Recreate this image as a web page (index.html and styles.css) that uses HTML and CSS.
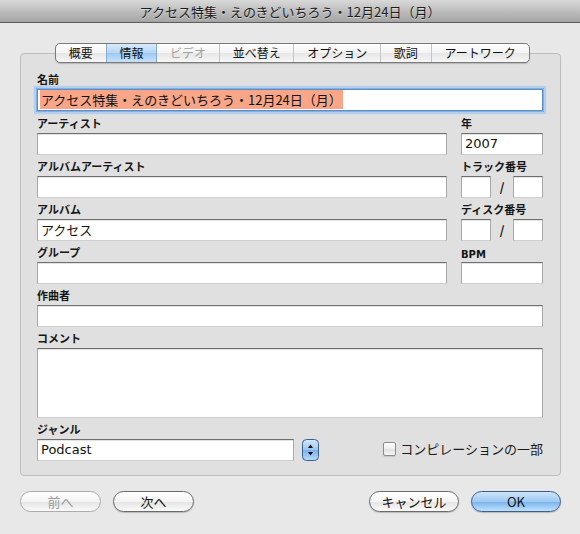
FILE: index.html
```html
<!DOCTYPE html>
<html lang="ja">
<head>
<meta charset="utf-8">
<title>情報</title>
<link rel="stylesheet" href="styles.css">
</head>
<body>
<div class="window">
  <div class="titlebar">アクセス特集・えのきどいちろう・12月24日（月）</div>
  <div class="content">
    <div class="tabs">
      <div class="tab">概要</div>
      <div class="tab sel">情報</div>
      <div class="tab dis">ビデオ</div>
      <div class="tab">並べ替え</div>
      <div class="tab">オプション</div>
      <div class="tab">歌詞</div>
      <div class="tab">アートワーク</div>
    </div>
    <div class="group">
      <div class="grid">
        <div class="field span name">
          <div class="label">名前</div>
          <div class="input focus"><span class="hl">アクセス特集・えのきどいちろう・12月24日（月）</span></div>
        </div>
        <div class="field">
          <div class="label">アーティスト</div>
          <div class="input"></div>
        </div>
        <div class="field">
          <div class="label">年</div>
          <div class="input latin">2007</div>
        </div>
        <div class="field">
          <div class="label">アルバムアーティスト</div>
          <div class="input"></div>
        </div>
        <div class="field">
          <div class="label">トラック番号</div>
          <div class="pair"><div class="input small"></div><span class="slash">/</span><div class="input small"></div></div>
        </div>
        <div class="field">
          <div class="label">アルバム</div>
          <div class="input">アクセス</div>
        </div>
        <div class="field">
          <div class="label">ディスク番号</div>
          <div class="pair"><div class="input small"></div><span class="slash">/</span><div class="input small"></div></div>
        </div>
        <div class="field">
          <div class="label">グループ</div>
          <div class="input"></div>
        </div>
        <div class="field">
          <div class="label latin">BPM</div>
          <div class="input"></div>
        </div>
        <div class="field span">
          <div class="label">作曲者</div>
          <div class="input"></div>
        </div>
        <div class="field span">
          <div class="label">コメント</div>
          <div class="input area"></div>
        </div>
        <div class="field span">
          <div class="label">ジャンル</div>
          <div class="genre-row">
            <div class="input latin genre">Podcast</div>
            <svg class="stepper" width="17" height="22" viewBox="0 0 17 22">
              <defs>
                <linearGradient id="sg" x1="0" y1="0" x2="0" y2="1">
                  <stop offset="0" stop-color="#d6e8fb"/>
                  <stop offset="0.48" stop-color="#9cc6f1"/>
                  <stop offset="0.52" stop-color="#7cb2ec"/>
                  <stop offset="1" stop-color="#b9dcfb"/>
                </linearGradient>
              </defs>
              <rect x="0.5" y="0.5" width="16" height="21" rx="4" fill="url(#sg)" stroke="#3d5f8c"/>
              <path d="M8.5 5.5 L11 9 L6 9 Z" fill="#111"/>
              <path d="M8.5 16.5 L11 13 L6 13 Z" fill="#111"/>
            </svg>
            <label class="check"><span class="box"></span>コンピレーションの一部</label>
          </div>
        </div>
      </div>
    </div>
    <div class="buttons">
      <div class="left">
        <div class="btn dis">前へ</div>
        <div class="btn">次へ</div>
      </div>
      <div class="right">
        <div class="btn wide">キャンセル</div>
        <div class="btn wide ok">OK</div>
      </div>
    </div>
  </div>
</div>
</body>
</html>
```
FILE: styles.css
```css
* { box-sizing: border-box; }
html, body { margin: 0; padding: 0; }
body {
  width: 580px;
  height: 534px;
  overflow: hidden;
  background: #e8e8e8;
  font-family: "Noto Sans CJK JP", sans-serif;
  color: #111;
}
.window { width: 580px; height: 534px; background: #e8e8e8; }
.titlebar {
  height: 23px;
  border-bottom: 1px solid #5c5c5c;
  background: linear-gradient(#d9d9d9, #bdbdbd 50%, #a4a4a4);
  display: flex;
  align-items: center;
  justify-content: center;
  font-size: 13px;
  color: #1c1c1c;
  text-shadow: 0 1px 0 rgba(255,255,255,0.45);
  line-height: 1;
}
.content { padding: 20px 19px 0 20px; }
.tabs {
  position: relative;
  z-index: 2;
  display: flex;
  width: max-content;
  height: 20px;
  margin: 0 0 -10px 35px;
  border: 1px solid #7a7a7a;
  border-radius: 5px;
  overflow: hidden;
  background: linear-gradient(#ffffff, #f3f3f3 50%, #e6e6e6 52%, #f7f7f7);
  box-shadow: 0 1px 1px rgba(0,0,0,0.18);
}
.tab {
  font-size: 12px;
  line-height: 18px;
  padding: 0 12.8px;
  border-left: 1px solid #c4c4c4;
  color: #111;
}
.tab:first-child { border-left: none; }
.tab.sel {
  background: linear-gradient(#d7eafc, #b4d6f6 50%, #9dc9f2 52%, #c6e3fc);
  border-left-color: #8aa9c9;
}
.tab.sel + .tab { border-left-color: #8aa9c9; }
.tab.dis { color: #a2a2a2; }
.group {
  width: 541px;
  border: 1px solid #bdbdbd;
  border-radius: 4px;
  background: #e0e0e0;
  padding: 19px 17px 14px 16px;
}
.grid {
  display: grid;
  grid-template-columns: 410px 82px;
  column-gap: 14px;
  row-gap: 5px;
}
.span { grid-column: 1 / -1; }
.field { display: flex; flex-direction: column; gap: 3px; }
.field.name { margin-bottom: 1px; }
.label {
  font-size: 11px;
  font-weight: bold;
  line-height: 13px;
  height: 13px;
  color: #151515;
}
.latin { font-family: "DejaVu Sans", "Noto Sans CJK JP", sans-serif; }
.label.latin { font-size: 10px; padding-top: 2px; }
.input {
  height: 22px;
  background: #fff;
  border: 1px solid #a9a9a9;
  border-top-color: #6f6f6f;
  border-bottom-color: #cfcfcf;
  box-shadow: inset 0 1px 0 #e4e4e4;
  font-size: 13px;
  line-height: 19px;
  padding: 0 3px;
  white-space: nowrap;
  overflow: hidden;
}
.input.latin { font-size: 13px; }
.input.focus {
  border: 1px solid #5b8cc8;
  box-shadow: 0 0 0 1px #86b0e0, 0 0 1px 3px #b4cfee;
  padding: 0 2px;
}
.hl { background: #f9a688; padding: 0 1px; }
.area { height: 70px; }
.pair { display: flex; align-items: center; justify-content: space-between; }
.input.small { width: 30px; }
.slash { font-size: 12px; font-weight: bold; line-height: 22px; width: 22px; text-align: center; }
.genre-row { display: flex; align-items: center; }
.genre { width: 257px; }
.stepper { margin-left: 8px; display: block; }
.check {
  margin-left: auto;
  display: flex;
  align-items: center;
  font-size: 13px;
  line-height: 22px;
  color: #1a1a1a;
  margin-top: -2px;
}
.box {
  width: 13px;
  height: 14px;
  border: 1px solid #8c8c8c;
  border-radius: 2px;
  background: linear-gradient(#fdfdfd, #eeeeee 50%, #e0e0e0 52%, #f6f6f6);
  box-shadow: 0 1px 1px rgba(0,0,0,0.12);
  margin-right: 4px;
}
.buttons {
  display: flex;
  justify-content: space-between;
  margin-top: 15px;
  width: 541px;
}
.left, .right { display: flex; gap: 12px; }
.btn {
  width: 81px;
  height: 21px;
  border: 1px solid #6a6a6a;
  border-radius: 11px;
  background: linear-gradient(#ffffff, #f4f4f4 50%, #e4e4e4 52%, #fbfbfb);
  box-shadow: 0 1px 1px rgba(0,0,0,0.2);
  font-size: 13px;
  line-height: 19px;
  text-align: center;
  color: #111;
}
.btn.wide { width: 90px; }
.btn.dis { color: #9c9c9c; border-color: #ababab; box-shadow: none; }
.btn.ok {
  border-color: #3e5e88;
  background: linear-gradient(#cfe4fb, #9ec9f3 50%, #7ab3ed 52%, #bfe1fd);
}
```
